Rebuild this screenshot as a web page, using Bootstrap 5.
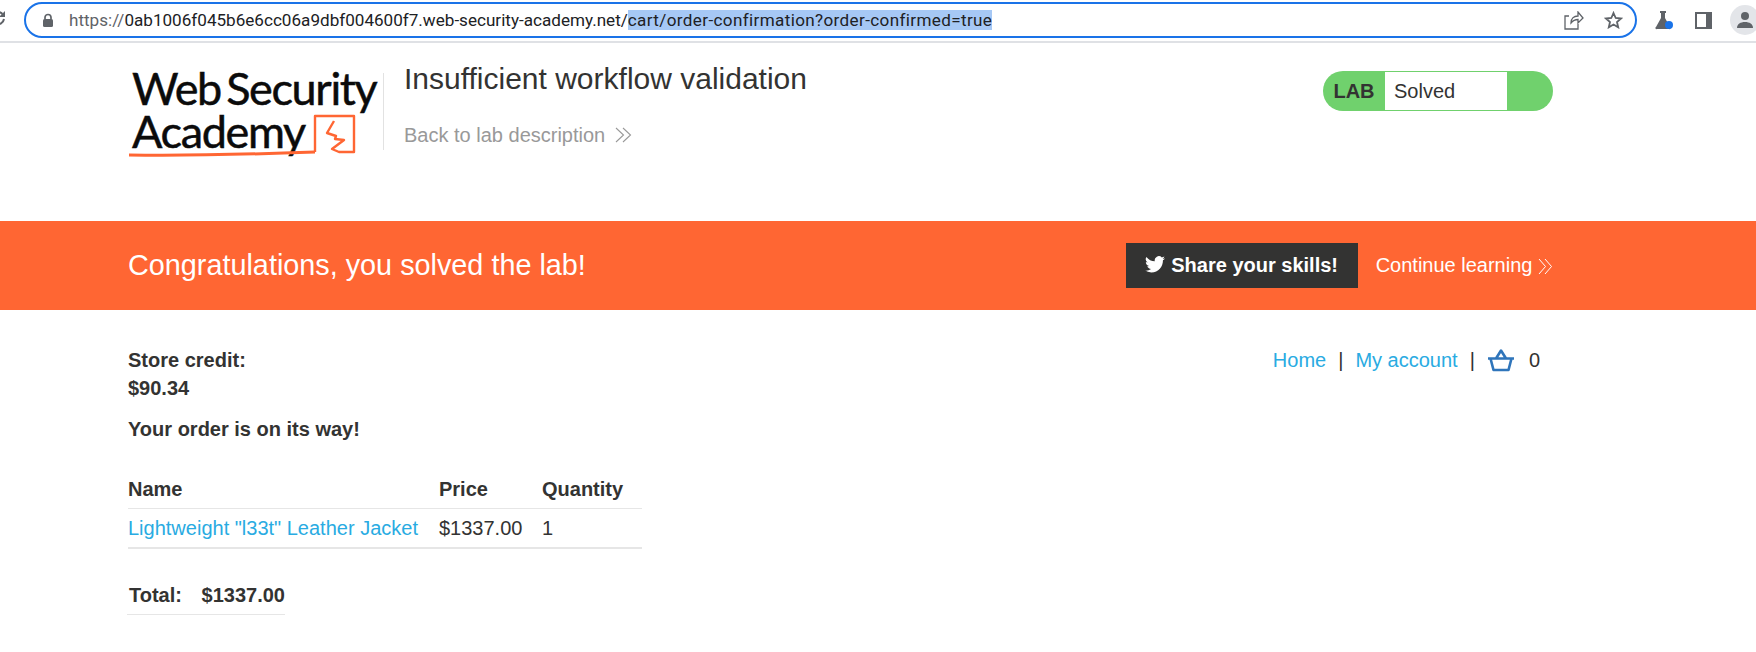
<!DOCTYPE html>
<html lang="en">
<head>
<meta charset="utf-8">
<title>Insufficient workflow validation</title>
<link href="https://cdn.jsdelivr.net/npm/bootstrap@5.3.0/dist/css/bootstrap.min.css" rel="stylesheet">
<style>
html,body{height:652px;overflow:hidden;}
body{font-family:"Liberation Sans",Arial,sans-serif;color:#333332;background:#fff;font-size:20px;line-height:28px;}
.chromebar{height:43px;border-bottom:2px solid #dfe1e5;padding:2px 0 0 0;overflow:hidden;}
.reload{width:24px;flex:none;margin-left:-16px;margin-right:16px;}
.urlpill{width:1613px;height:36px;flex:none;border:2.5px solid #1a73e8;border-radius:18px;padding:0 12.5px 0 16px;font-family:"Roboto",sans-serif;font-size:17.1px;color:#202124;white-space:nowrap;}
.lockicon{margin-right:15px;flex:none;}
.urlhost{color:#5f6368;}
.urlsel{background:#a6c8f5;letter-spacing:.36px;}
.urlicons{margin-left:auto;gap:20px;}
.tbicons{margin-left:17px;flex:none;}
.tbflask{margin-right:21px;}
.tbpanel{margin-right:18px;}
.avatar{width:30px;height:30px;border-radius:50%;background:#e3e5e9;overflow:hidden;flex:none;}
.pagewrap{width:1425px;margin-left:128px;}
.headzone{height:178px;padding-top:17px;}
.logosvg{display:block;flex:none;}
.logotxt{font-family:"Lato",sans-serif;fill:#0b0b0b;stroke:#0b0b0b;stroke-width:.5px;font-size:45px;letter-spacing:-1.35px;word-spacing:-5px;}
.logodiv{width:1px;height:77px;background:#e2e2e2;margin-top:13px;flex:none;}
.labtext{padding-left:20px;padding-top:4px;}
.labtitle{font-size:30px;font-weight:400;line-height:30px;margin:0;color:#333332;width:500px;}
.backlink{display:block;margin-top:29px;color:#999;font-size:20px;text-decoration:none;line-height:24px;}
.chev{vertical-align:-1px;}
.labstatus{width:230px;height:40px;border-radius:20px;background:#70d16d;margin-left:auto;margin-top:11px;overflow:hidden;flex:none;padding:1px 0;}
.labtag{width:62px;font-weight:700;font-size:20px;text-align:center;color:#333332;line-height:38px;flex:none;}
.labstate{width:122px;background:#fff;line-height:38px;height:38px;padding-left:9px;font-size:20px;color:#333332;}
.banner{height:89px;background:#ff6633;}
.bannertxt{font-size:28.8px;color:#fff;line-height:1;}
.sharebtn{width:232px;height:45px;background:#333332;color:#fff;font-weight:700;font-size:20px;border-radius:0;border:0;gap:6px;padding:0 0 2px 0;}
.contlink{color:#fff;font-size:20px;text-decoration:none;margin-left:18px;white-space:nowrap;padding-bottom:2px;}
.mainzone{padding-top:36px;}
.boldline{font-weight:700;line-height:28px;}
.orderline{margin-top:13px;}
.toplinks{line-height:24px;margin-right:13px;padding-top:2px;}
.toplinks a{color:#29abe2;text-decoration:none;}
.sep{margin:0 12px;}
.basketnum{margin-left:14px;}
.ordertable{width:514px;border-collapse:collapse;margin-top:32px;}
.ordertable th{font-weight:700;padding:0 0 5px 0;border-bottom:1px solid #e6e6e6;line-height:28px;}
.ordertable td{padding:5px 0 5px 0;border-bottom:2px solid #e6e6e6;line-height:28px;}
.ordertable a{color:#29abe2;text-decoration:none;}
.cname{width:311px;}
.cprice{width:103px;}
.totalline{width:158px;margin-left:-1px;display:flex;justify-content:space-between;font-weight:700;line-height:28px;border-bottom:1px solid #e6e6e6;margin-top:32px;padding-bottom:5px;}
.totalline span:first-child{padding-left:2px;}
</style>
</head>
<body>
<div class="chromebar d-flex align-items-start">
  <div class="reload d-flex align-items-center" style="height:36px">
    <svg width="22" height="18" viewBox="0 0 22 18"><path d="M18.500 3A6 6 0 1 0 20 8" fill="none" stroke="#5f6368" stroke-width="2"/><path d="M21 0v6h-6z" fill="#5f6368"/></svg>
  </div>
  <div class="urlpill d-flex align-items-center">
    <svg width="12" height="15" viewBox="0 0 12 15" class="lockicon"><path d="M3 6V4.500a3 3 0 0 1 6 0V6" fill="none" stroke="#5f6368" stroke-width="1.700"/><rect x="1" y="6" width="10" height="8" rx="1.500" fill="#5f6368"/></svg>
    <span><span class="urlhost">https://</span>0ab1006f045b6e6cc06a9dbf004600f7.web-security-academy.net/<span class="urlsel">cart/order-confirmation?order-confirmed=true</span></span>
    <div class="urlicons d-flex align-items-center">
      <svg width="20" height="19" viewBox="0 0 20 19"><path d="M5 5H1v13h13v-5M7 12c0-5 3-7 7-7V1l5 6-5 5V8.500c-3 0-5 1-7 3.500z" fill="none" stroke="#5f6368" stroke-width="1.300"/></svg>
      <svg width="19" height="18" viewBox="0 0 19 18"><path d="M9.500 2l2.200 5 5.300.5-4 3.500 1.200 5.300-4.700-2.800-4.700 2.800L6 11 2 7.500 7.300 7z" fill="none" stroke="#5f6368" stroke-width="1.800"/></svg>
    </div>
  </div>
  <div class="tbicons d-flex align-items-center" style="height:36px">
    <svg class="tbflask" width="20" height="20" viewBox="0 0 20 20"><path d="M6 1h6v2h-1v5l5 9a1 1 0 0 1-1 2H3a1 1 0 0 1-1-2l5-9V3H6z" fill="#5f6368"/><circle cx="15" cy="15" r="4" fill="#1a73e8"/></svg>
    <svg class="tbpanel" width="17" height="17" viewBox="0 0 17 17"><path d="M0 0h17v17H0z" fill="#5f6368"/><rect x="2" y="2" width="9" height="13" fill="#fff"/></svg>
    <div class="avatar d-flex align-items-center justify-content-center"><svg width="18" height="18" viewBox="0 0 18 18"><circle cx="9" cy="5" r="4" fill="#5f6368"/><path d="M1 17c0-4 3.500-6 8-6s8 2 8 6z" fill="#5f6368"/></svg></div>
  </div>
</div>

<div class="pagewrap headzone d-flex align-items-start">
  <svg class="logosvg" width="255" height="105" viewBox="128 60 255 105">
    <text class="logotxt" x="132" y="105">Web Security</text>
    <text class="logotxt" x="132" y="148">Academy</text>
    <path d="M129 155C190 156 260 154 315 152" fill="none" stroke="#ff6633" stroke-width="3"/>
    <path d="M315 152V116H354V152H339L332 149 344 140 335 139 336 136 327 133 334 121" fill="none" stroke="#ff6633" stroke-width="2.400" stroke-linejoin="round"/>
  </svg>
  <div class="logodiv"></div>
  <div class="labtext">
    <h2 class="labtitle">Insufficient workflow validation</h2>
    <a class="backlink" href="#">Back to lab description <svg class="chev ms-1" width="17" height="16" viewBox="0 0 17 16"><path d="M1 1l7.500 7-7.500 7M8 1l7.500 7-7.500 7" fill="none" stroke="#999" stroke-width="1.100"/></svg></a>
  </div>
  <div class="labstatus d-flex">
    <div class="labtag">LAB</div>
    <div class="labstate">Solved</div>
  </div>
</div>

<div class="banner">
  <div class="pagewrap h-100 d-flex align-items-center">
    <div class="bannertxt">Congratulations, you solved the lab!</div>
    <div class="d-flex align-items-center ms-auto">
      <button class="btn sharebtn d-flex align-items-center justify-content-center" type="button">
        <svg width="20" height="17" viewBox="0 0 24 20"><path d="M24 2.400a10 10 0 0 1-2.800.8A5 5 0 0 0 23.300.5a10 10 0 0 1-3.100 1.200 4.900 4.900 0 0 0-8.400 4.500A14 14 0 0 1 1.700.9a4.900 4.900 0 0 0 1.500 6.600 4.900 4.900 0 0 1-2.200-.6c0 2.400 1.700 4.400 3.900 4.900a4.900 4.900 0 0 1-2.200.1 4.900 4.900 0 0 0 4.600 3.400A9.900 9.900 0 0 1 0 17.300 14 14 0 0 0 7.500 19.500c9.100 0 14.300-7.700 14-14.600A10 10 0 0 0 24 2.400z" fill="#fff"/></svg>
        Share your skills!
      </button>
      <a class="contlink" href="#">Continue learning <svg width="15" height="17" viewBox="0 0 15 17"><path d="M1 1l6.500 7.500-6.500 7.500M7 1l6.500 7.500-6.500 7.500" fill="none" stroke="#fff" stroke-width="1"/></svg></a>
    </div>
  </div>
</div>

<div class="pagewrap mainzone">
  <div class="d-flex align-items-start">
    <div class="boldline">Store credit:<br>$90.34</div>
    <div class="toplinks ms-auto d-flex align-items-center">
      <a href="#">Home</a><span class="sep">|</span><a href="#">My account</a><span class="sep">|</span>
      <svg width="28" height="24" viewBox="0 0 28 24"><path d="M1 10.500h26M3.500 10.500l3 11.500h15l3-11.500M9 10.500l5-8 5 8" fill="none" stroke="#2f75bb" stroke-width="2.600" stroke-linejoin="round"/></svg>
      <span class="basketnum">0</span>
    </div>
  </div>
  <div class="boldline orderline">Your order is on its way!</div>
  <table class="ordertable">
    <thead><tr><th class="cname text-start">Name</th><th class="cprice text-start">Price</th><th class="text-start">Quantity</th></tr></thead>
    <tbody><tr><td><a href="#">Lightweight "l33t" Leather Jacket</a></td><td>$1337.00</td><td>1</td></tr></tbody>
  </table>
  <div class="totalline"><span>Total:</span><span>$1337.00</span></div>
</div>
</body>
</html>
